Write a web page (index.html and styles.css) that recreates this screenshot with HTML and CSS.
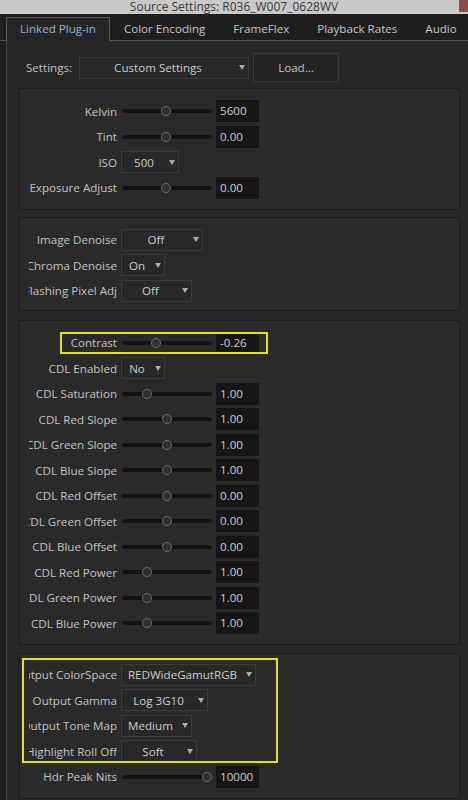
FILE: index.html
```html
<!DOCTYPE html>
<html lang="en">
<head>
    <meta charset="UTF-8">
    <meta name="viewport" content="width=device-width, initial-scale=1.0">
    <title>Source Settings</title>
    <link rel="stylesheet" href="styles.css">
</head>
<body>

    <div class="titlebar">
        <span class="title">Source Settings: R036_W007_0628WV</span>
        <span class="close"></span>
    </div>

    <div class="tabs">
        <div class="tab active">Linked Plug-in</div>
        <div class="tab">Color Encoding</div>
        <div class="tab">FrameFlex</div>
        <div class="tab">Playback Rates</div>
        <div class="tab">Audio</div>
    </div>

    <div class="panel">

        <div class="settings-row">
            <span class="settings-label">Settings:</span>
            <div class="dropdown settings-select"><span class="dd-text">Custom Settings</span><span class="dd-arrow"></span></div>
            <div class="button">Load...</div>
        </div>

        <!-- white balance / iso -->
        <div class="group g1">
            <div class="row">
                <span class="label"><span>Kelvin</span></span>
                <div class="slider"><span class="thumb" style="left:44px"></span></div>
                <div class="value">5600</div>
            </div>
            <div class="row">
                <span class="label"><span>Tint</span></span>
                <div class="slider"><span class="thumb" style="left:44px"></span></div>
                <div class="value">0.00</div>
            </div>
            <div class="row">
                <span class="label"><span>ISO</span></span>
                <div class="dropdown w58"><span class="dd-text">500</span><span class="dd-arrow"></span></div>
            </div>
            <div class="row">
                <span class="label"><span>Exposure Adjust</span></span>
                <div class="slider"><span class="thumb" style="left:44px"></span></div>
                <div class="value">0.00</div>
            </div>
        </div>

        <!-- denoise -->
        <div class="group g2">
            <div class="row">
                <span class="label"><span>Image Denoise</span></span>
                <div class="dropdown w82"><span class="dd-text">Off</span><span class="dd-arrow"></span></div>
            </div>
            <div class="row">
                <span class="label"><span>Chroma Denoise</span></span>
                <div class="dropdown w44"><span class="dd-text">On</span><span class="dd-arrow"></span></div>
            </div>
            <div class="row">
                <span class="label"><span>Flashing Pixel Adj</span></span>
                <div class="dropdown w71"><span class="dd-text">Off</span><span class="dd-arrow"></span></div>
            </div>
        </div>

        <!-- contrast + CDL -->
        <div class="group g3">
            <div class="row marked">
                <span class="label"><span>Contrast</span></span>
                <div class="slider"><span class="thumb" style="left:34px"></span></div>
                <div class="value">-0.26</div>
            </div>
            <div class="row">
                <span class="label"><span>CDL Enabled</span></span>
                <div class="dropdown w44"><span class="dd-text">No</span><span class="dd-arrow"></span></div>
            </div>
            <div class="row">
                <span class="label"><span>CDL Saturation</span></span>
                <div class="slider"><span class="thumb" style="left:25px"></span></div>
                <div class="value">1.00</div>
            </div>
            <div class="row">
                <span class="label"><span>CDL Red Slope</span></span>
                <div class="slider"><span class="thumb" style="left:45px"></span></div>
                <div class="value">1.00</div>
            </div>
            <div class="row">
                <span class="label"><span>CDL Green Slope</span></span>
                <div class="slider"><span class="thumb" style="left:45px"></span></div>
                <div class="value">1.00</div>
            </div>
            <div class="row">
                <span class="label"><span>CDL Blue Slope</span></span>
                <div class="slider"><span class="thumb" style="left:45px"></span></div>
                <div class="value">1.00</div>
            </div>
            <div class="row">
                <span class="label"><span>CDL Red Offset</span></span>
                <div class="slider"><span class="thumb" style="left:45px"></span></div>
                <div class="value">0.00</div>
            </div>
            <div class="row">
                <span class="label"><span>CDL Green Offset</span></span>
                <div class="slider"><span class="thumb" style="left:45px"></span></div>
                <div class="value">0.00</div>
            </div>
            <div class="row">
                <span class="label"><span>CDL Blue Offset</span></span>
                <div class="slider"><span class="thumb" style="left:45px"></span></div>
                <div class="value">0.00</div>
            </div>
            <div class="row">
                <span class="label"><span>CDL Red Power</span></span>
                <div class="slider"><span class="thumb" style="left:25px"></span></div>
                <div class="value">1.00</div>
            </div>
            <div class="row">
                <span class="label"><span>CDL Green Power</span></span>
                <div class="slider"><span class="thumb" style="left:25px"></span></div>
                <div class="value">1.00</div>
            </div>
            <div class="row">
                <span class="label"><span>CDL Blue Power</span></span>
                <div class="slider"><span class="thumb" style="left:25px"></span></div>
                <div class="value">1.00</div>
            </div>
        </div>

        <!-- output -->
        <div class="group g4">
            <span class="mark mark-output"></span>
            <div class="row">
                <span class="label"><span>Output ColorSpace</span></span>
                <div class="dropdown w135"><span class="dd-text">REDWideGamutRGB</span><span class="dd-arrow"></span></div>
            </div>
            <div class="row">
                <span class="label"><span>Output Gamma</span></span>
                <div class="dropdown w87"><span class="dd-text">Log 3G10</span><span class="dd-arrow"></span></div>
            </div>
            <div class="row">
                <span class="label"><span>Output Tone Map</span></span>
                <div class="dropdown w71"><span class="dd-text">Medium</span><span class="dd-arrow"></span></div>
            </div>
            <div class="row">
                <span class="label"><span>Highlight Roll Off</span></span>
                <div class="dropdown w76"><span class="dd-text">Soft</span><span class="dd-arrow"></span></div>
            </div>
            <div class="row">
                <span class="label"><span>Hdr Peak Nits</span></span>
                <div class="slider"><span class="thumb" style="left:85px"></span></div>
                <div class="value">10000</div>
            </div>
        </div>

    </div>

</body>
</html>
```

FILE: styles.css
```css
body {
    margin: 0;
    width: 468px;
    height: 800px;
    overflow: hidden;
    background-color: #1e1e1e;
    font-family: "Open Sans", "Liberation Sans", sans-serif;
    font-size: 11.6px;
    color: #c2c2c2;
}

/* window title */
.titlebar {
    position: relative;
    height: 14px;
    background-color: #c9c9c9;
    color: #3a3a3a;
    text-align: center;
    font-size: 12px;
    line-height: 14px;
}

.close {
    position: absolute;
    top: 0;
    right: 0;
    width: 9px;
    height: 12px;
    background-color: #8e4c4c;
}

/* tab strip */
.tabs {
    display: flex;
    margin-top: 3px;
    padding-left: 6px;
    height: 23px;
    border-bottom: 1px solid #555;
}

.tab {
    padding: 0 13px;
    line-height: 22px;
    border: 1px solid transparent;
    border-bottom: none;
    color: #c6c6c6;
    white-space: nowrap;
}

.tab.active {
    background-color: #262626;
    border-color: #5a5a5a;
    margin-bottom: -1px;
    color: #8db3dc;
}

.panel {
    margin-left: 6px;
    border-left: 1px solid #474747;
    background-color: #262626;
    padding: 12px 8px 0 12px;
    height: 747px;
}

/* settings preset row */
.settings-row {
    display: flex;
    align-items: center;
    height: 29px;
    padding-left: 7px;
    margin-bottom: 6px;
}

.settings-label {
    width: 53px;
}

.settings-select {
    width: 170px;
    margin-right: 4px;
}

.button {
    width: 86px;
    height: 29px;
    box-sizing: border-box;
    border: 1px solid #3a3a3a;
    background-color: #232323;
    line-height: 27px;
    text-align: center;
}

/* grouped parameter boxes */
.group {
    position: relative;
    display: flex;
    flex-direction: column;
    gap: 3.5px;
    border: 1px solid #1a1a1a;
    background-color: #2a2a2a;
    padding: 11px 0 10px 9px;
    margin-bottom: 7.5px;
}

.g2 {
    padding-top: 10.5px;
    padding-bottom: 8px;
    margin-bottom: 9px;
}

.g4 {
    padding-top: 10px;
}

.row {
    position: relative;
    display: flex;
    align-items: center;
    height: 22px;
}

.label {
    display: flex;
    justify-content: flex-end;
    width: 88px;
    margin-right: 4px;
    overflow: hidden;
    white-space: nowrap;
}

/* slider */
.slider {
    position: relative;
    width: 90px;
    height: 22px;
    margin-left: 1px;
    margin-right: 4px;
}

.slider:before {
    content: "";
    position: absolute;
    left: 0;
    right: 0;
    top: 9px;
    height: 4px;
    border-radius: 2px;
    background-color: #131313;
}

.thumb {
    position: absolute;
    top: 6px;
    width: 10px;
    height: 10px;
    margin-left: -5px;
    box-sizing: border-box;
    border: 1px solid #6c6c6c;
    border-radius: 50%;
    background-color: #303030;
}

.value {
    width: 43px;
    height: 22px;
    box-sizing: border-box;
    padding-left: 4px;
    background-color: #161616;
    color: #cdcdcd;
    line-height: 22px;
}

/* dropdown */
.dropdown {
    display: flex;
    align-items: center;
    height: 22px;
    box-sizing: border-box;
    border: 1px solid #3c3c3c;
    background-color: #282828;
    color: #cbcbcb;
}

.dd-text {
    flex: 1;
    text-align: center;
    white-space: nowrap;
}

.dd-arrow {
    width: 12px;
    display: flex;
    justify-content: center;
}

.dd-arrow:before {
    content: "";
    border-left: 3px solid transparent;
    border-right: 3px solid transparent;
    border-top: 5px solid #ababab;
}

.w44 { width: 44px; }
.w58 { width: 58px; }
.w71 { width: 71px; }
.w76 { width: 76px; }
.w82 { width: 82px; }
.w87 { width: 87px; }
.w135 { width: 135px; }

/* yellow highlight frames */
.marked:after {
    content: "";
    position: absolute;
    top: 0;
    bottom: 0;
    left: 31px;
    width: 208px;
    box-sizing: border-box;
    border: 2px solid #e2e21c;
}

.mark {
    position: absolute;
    box-sizing: border-box;
    border: 2px solid #e2e21c;
    z-index: 1;
}

.mark-output {
    left: 2px;
    top: 4px;
    width: 256px;
    height: 105px;
}
```
